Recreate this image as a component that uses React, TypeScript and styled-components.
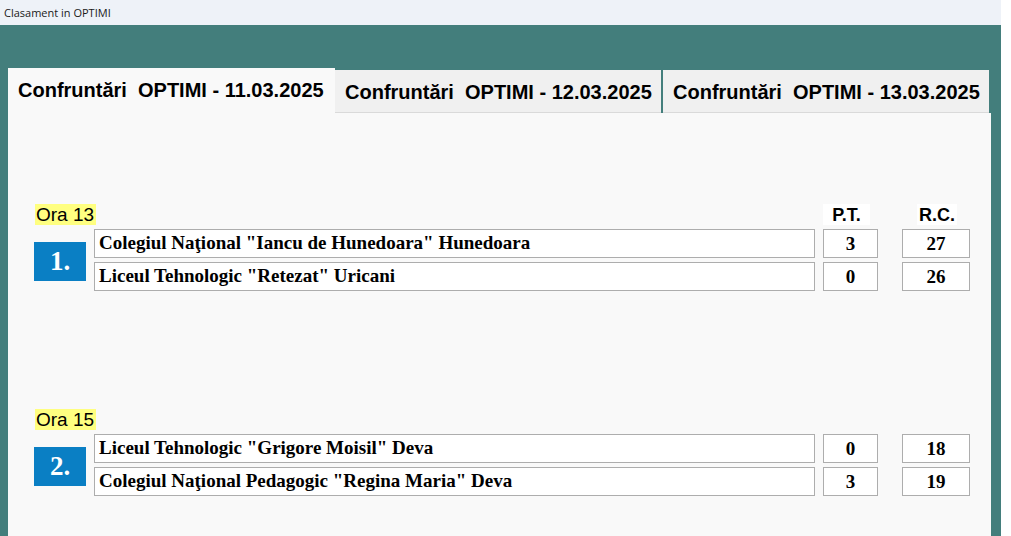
import styled, { createGlobalStyle } from "styled-components";

const GlobalStyle = createGlobalStyle`
    html, body {
        margin: 0;
        padding: 0;
        background: #ffffff;
    }
    * {
        box-sizing: border-box;
    }
`

const tabs = [
    { label: "Confruntări  OPTIMI - 11.03.2025", active: true, gap: 0 },
    { label: "Confruntări  OPTIMI - 12.03.2025", active: false, gap: 0 },
    { label: "Confruntări  OPTIMI - 13.03.2025", active: false, gap: 2 },
]

const matches = [
    {
        ora: "Ora 13",
        nr: "1.",
        rows: [
            { team: "Colegiul Naţional \"Iancu de Hunedoara\" Hunedoara", pt: "3", rc: "27" },
            { team: "Liceul Tehnologic \"Retezat\" Uricani", pt: "0", rc: "26" },
        ],
    },
    {
        ora: "Ora 15",
        nr: "2.",
        rows: [
            { team: "Liceul Tehnologic \"Grigore Moisil\" Deva", pt: "0", rc: "18" },
            { team: "Colegiul Naţional Pedagogic \"Regina Maria\" Deva", pt: "3", rc: "19" },
        ],
    },
]

const App = () => {
    return (
        <Window>
            <GlobalStyle />
            <TitleBar>Clasament in OPTIMI</TitleBar>
            <Client>
                <TabStrip>
                    {tabs.map((t) => (
                        <Tab key={t.label} $active={t.active} $gap={t.gap}>{t.label}</Tab>
                    ))}
                </TabStrip>
                <Panel>
                    {matches.map((m, i) => (
                        <Group key={m.nr}>
                            <GroupHead>
                                <OraCell>
                                    <Ora>{m.ora}</Ora>
                                </OraCell>
                                {i === 0 && (
                                    <>
                                        <ColHead $w={47} $ml={0}>P.T.</ColHead>
                                        <ColHead $w={40} $ml={47}>R.C.</ColHead>
                                    </>
                                )}
                            </GroupHead>
                            <Match>
                                <Badge>{m.nr}</Badge>
                                <Teams>
                                    {m.rows.map((r) => (
                                        <TeamBox key={r.team}>{r.team}</TeamBox>
                                    ))}
                                </Teams>
                                <Scores $ml={8}>
                                    {m.rows.map((r, k) => (
                                        <ScoreBox key={k} $w={55}>{r.pt}</ScoreBox>
                                    ))}
                                </Scores>
                                <Scores $ml={24}>
                                    {m.rows.map((r, k) => (
                                        <ScoreBox key={k} $w={68}>{r.rc}</ScoreBox>
                                    ))}
                                </Scores>
                            </Match>
                        </Group>
                    ))}
                </Panel>
            </Client>
        </Window>
    )
}

const Window = styled.div`
    width: 1001px;
    height: 536px;
    display: flex;
    flex-direction: column;
    overflow: hidden;
`

const TitleBar = styled.div`
    height: 25px;
    flex: none;
    background: #eef2f8;
    color: #1a1a1a;
    font-family: "Open Sans", "Noto Sans", sans-serif;
    font-size: 11px;
    line-height: 25px;
    padding-left: 4px;
`

const Client = styled.div`
    flex: 1;
    background: #437e7c;
    padding: 43px 10px 0 8px;
    display: flex;
    flex-direction: column;
`

const TabStrip = styled.div`
    display: flex;
    align-items: flex-end;
    height: 45px;
    flex: none;
`

const Tab = styled.div<{ $active: boolean; $gap: number }>`
    width: ${p => p.$active ? 327 : 326}px;
    height: ${p => p.$active ? 45 : 43}px;
    margin-left: ${p => p.$gap}px;
    padding-left: 10px;
    padding-top: ${p => p.$active ? 0 : 2}px;
    display: flex;
    align-items: center;
    background: ${p => p.$active ? "#f9f9f9" : "#f0f0f0"};
    border-bottom: ${p => p.$active ? "none" : "1px solid #dadada"};
    font-family: "Liberation Sans", Arial, sans-serif;
    font-weight: bold;
    font-size: 20px;
    color: #000;
    white-space: pre;
`

const Panel = styled.div`
    flex: 1;
    width: 983px;
    background: #f9f9f9;
    padding: 90px 0 0 26px;
    display: flex;
    flex-direction: column;
    gap: 117px;
`

const Group = styled.div`
    display: flex;
    flex-direction: column;
    gap: 4px;
`

const GroupHead = styled.div`
    display: flex;
    align-items: flex-end;
    height: 22px;
`

const OraCell = styled.div`
    width: 789px;
    padding-left: 1px;
    display: flex;
    align-items: flex-end;
`

const Ora = styled.div`
    background: #ffff80;
    padding: 0 2px 0 1px;
    font-family: "Liberation Sans", Arial, sans-serif;
    font-size: 19px;
    line-height: 21px;
    color: #000;
`

const ColHead = styled.div<{ $w: number; $ml: number }>`
    width: ${p => p.$w}px;
    margin-left: ${p => p.$ml}px;
    height: 21px;
    background: #ffffff;
    font-family: "Liberation Sans", Arial, sans-serif;
    font-weight: bold;
    font-size: 18px;
    line-height: 22px;
    text-align: center;
    color: #000;
`

const Match = styled.div`
    display: flex;
    align-items: center;
`

const Badge = styled.div`
    width: 52px;
    height: 39px;
    margin-right: 8px;
    margin-top: 2px;
    background: #0a7fc4;
    color: #ffffff;
    font-family: "Liberation Serif", "Times New Roman", serif;
    font-weight: bold;
    font-size: 27px;
    display: flex;
    align-items: center;
    justify-content: center;
`

const Teams = styled.div`
    width: 721px;
    display: flex;
    flex-direction: column;
    gap: 4px;
`

const TeamBox = styled.div`
    height: 29px;
    background: #ffffff;
    border: 1px solid #adadad;
    padding-left: 4px;
    font-family: "Liberation Serif", "Times New Roman", serif;
    font-weight: bold;
    font-size: 19px;
    line-height: 26px;
    color: #000;
    white-space: nowrap;
`

const Scores = styled.div<{ $ml: number }>`
    margin-left: ${p => p.$ml}px;
    display: flex;
    flex-direction: column;
    gap: 4px;
`

const ScoreBox = styled.div<{ $w: number }>`
    width: ${p => p.$w}px;
    height: 29px;
    background: #ffffff;
    border: 1px solid #adadad;
    font-family: "Liberation Serif", "Times New Roman", serif;
    font-weight: bold;
    font-size: 19px;
    line-height: 27px;
    text-align: center;
    color: #000;
`

export default App;
